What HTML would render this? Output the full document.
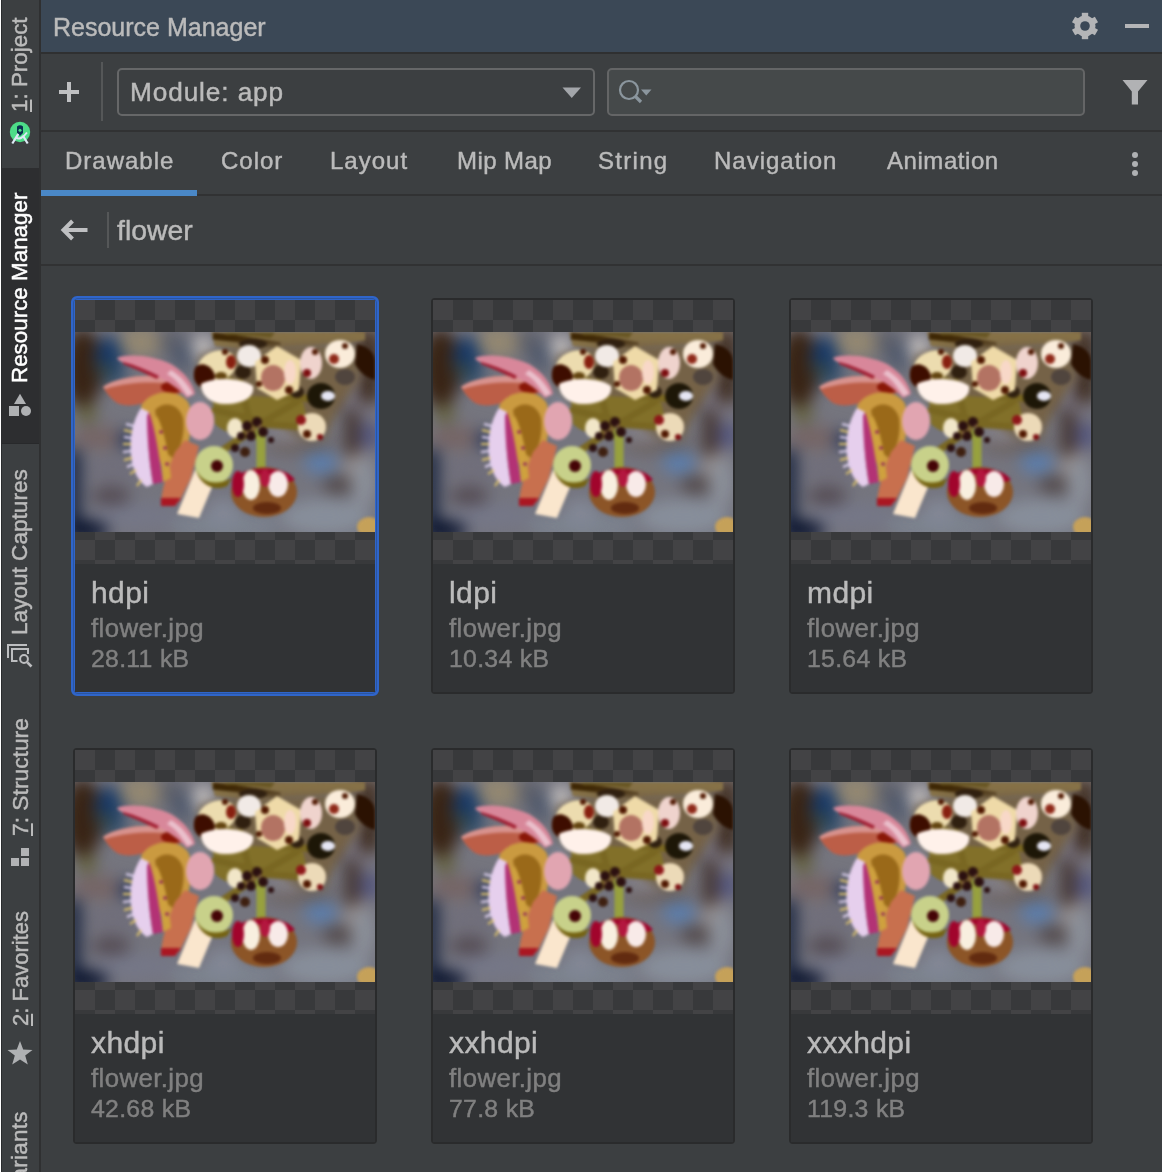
<!DOCTYPE html>
<html><head><meta charset="utf-8"><style>
html,body{margin:0;padding:0}
body{width:1162px;height:1172px;overflow:hidden;position:relative;background:#3c3f41;font-family:"Liberation Sans", sans-serif}
.t{position:absolute;white-space:nowrap;line-height:1;-webkit-text-stroke-width:0.45px;will-change:transform}
.r{position:absolute;box-sizing:content-box}
.chk{background:repeating-conic-gradient(#38393b 0% 25%,#434345 0% 50%) 0 0/40px 40px}
</style></head><body>
<svg width="0" height="0" style="position:absolute"><defs><filter id="fb1" x="-20%" y="-20%" width="140%" height="140%" color-interpolation-filters="sRGB"><feGaussianBlur stdDeviation="8"/></filter>
<filter id="fb2" x="-10%" y="-10%" width="120%" height="120%" color-interpolation-filters="sRGB"><feGaussianBlur stdDeviation="1.4"/></filter>
<filter id="fcon" x="0" y="0" width="100%" height="100%" color-interpolation-filters="sRGB"><feComponentTransfer><feFuncR type="linear" slope="1.15" intercept="-0.09"/><feFuncG type="linear" slope="1.15" intercept="-0.09"/><feFuncB type="linear" slope="1.15" intercept="-0.08"/></feComponentTransfer></filter>
<filter id="fb3" x="-20%" y="-20%" width="140%" height="140%" color-interpolation-filters="sRGB"><feGaussianBlur stdDeviation="5"/></filter>
<clipPath id="fclip"><rect width="300" height="200"/></clipPath>
<symbol id="flower" viewBox="0 0 300 200">
<g clip-path="url(#fclip)" filter="url(#fcon)">
<rect width="300" height="200" fill="#7a7a80"/>
<g filter="url(#fb1)">
<ellipse cx="8" cy="36" rx="20" ry="40" fill="#463424"/>
<ellipse cx="34" cy="28" rx="14" ry="24" fill="#28466c"/><ellipse cx="40" cy="44" rx="10" ry="8" fill="#30506e"/>
<circle cx="30" cy="38" r="6" fill="#5e603c"/>
<ellipse cx="66" cy="10" rx="22" ry="16" fill="#948a74"/>
<ellipse cx="96" cy="10" rx="12" ry="14" fill="#66686e"/>
<ellipse cx="24" cy="106" rx="28" ry="12" fill="#7a6c6a"/>
<circle cx="12" cy="82" r="10" fill="#6c6a46"/>
<rect x="-10" y="118" width="16" height="90" fill="#2a3448"/>
<ellipse cx="12" cy="198" rx="22" ry="10" fill="#1c2438"/>
<ellipse cx="36" cy="164" rx="20" ry="9" fill="#5c5458"/>
<ellipse cx="38" cy="138" rx="28" ry="14" fill="#76747c"/>
<ellipse cx="60" cy="184" rx="44" ry="12" fill="#7a7c88"/>
<ellipse cx="52" cy="108" rx="8" ry="10" fill="#304060"/>
<ellipse cx="150" cy="194" rx="55" ry="14" fill="#80868e"/>


<ellipse cx="282" cy="135" rx="14" ry="22" fill="#948c88"/>
<ellipse cx="250" cy="185" rx="45" ry="18" fill="#8a9098"/>
<ellipse cx="294" cy="104" rx="12" ry="14" fill="#5e6080"/>
<ellipse cx="285" cy="62" rx="18" ry="26" fill="#7c7880"/>
<ellipse cx="290" cy="5" rx="15" ry="12" fill="#807060"/>
<rect x="252" y="38" width="10" height="40" fill="#4a3c34"/><rect x="270" y="78" width="14" height="45" fill="#4e4038"/><rect x="284" y="0" width="20" height="70" fill="#4a3a2c"/><ellipse cx="246" cy="130" rx="17" ry="12" fill="#6482a8"/><ellipse cx="265" cy="153" rx="18" ry="9" fill="#5a5250"/><ellipse cx="288" cy="150" rx="12" ry="26" fill="#8e9298"/>
<ellipse cx="108" cy="24" rx="12" ry="15" fill="#5a6270"/>
<ellipse cx="128" cy="16" rx="10" ry="13" fill="#c4c0bc"/>
<ellipse cx="130" cy="70" rx="10" ry="8" fill="#8890a0"/>
<ellipse cx="225" cy="114" rx="36" ry="7" fill="#706660"/>
<ellipse cx="212" cy="100" rx="18" ry="10" fill="#8c8a90"/>
<ellipse cx="148" cy="180" rx="16" ry="14" fill="#868a94"/>
</g>
<g filter="url(#fb2)">
<!-- top stems band -->
<path d="M136 0 H290 V8 C270 12 230 12 200 16 C180 18 160 16 140 14 Z" fill="#8a7850"/>
<path d="M138 4 C160 6 185 10 205 14" stroke="#4a3616" stroke-width="7" fill="none"/>
<path d="M150 0 H200 L196 6 C180 4 165 3 150 3 Z" fill="#706030"/>
<path d="M124 24 L170 12 L280 10 L286 44 L262 80 L250 106 L230 108 L198 90 L162 96 L144 78 L126 56 Z" fill="#7a6a50" filter="url(#fb3)"/>
<!-- stems center -->
<path d="M138 66 C160 62 200 64 228 70 L232 88 C215 92 200 96 190 92 L176 100 C160 104 148 100 140 92 Z" fill="#857636"/>
<g stroke="#7e6e30" stroke-width="7" fill="none" stroke-linecap="round">
<path d="M140 78 L190 90"/><path d="M185 92 L222 70"/><path d="M185 92 L232 95"/><path d="M178 98 L145 120"/><path d="M165 50 L175 90"/><path d="M140 42 L172 56"/><path d="M205 64 L250 68"/>
</g>
<path d="M180 100 L186 106 L186 138" stroke="#98a048" stroke-width="9" fill="none"/>
<!-- buds upper -->
<g fill="#3e3020"><ellipse cx="168" cy="40" rx="8" ry="7"/><ellipse cx="222" cy="60" rx="7" ry="6"/><ellipse cx="178" cy="12" rx="14" ry="5"/></g>
<ellipse cx="270" cy="45" rx="10" ry="8" fill="#5a5048"/>
<ellipse cx="142" cy="34" rx="20" ry="15" transform="rotate(-20 142 34)" fill="#e2d4aa"/>
<path d="M120 36 C126 28 138 34 140 44 C140 52 132 58 124 54 C118 50 118 42 120 36 Z" fill="#4a2010"/>
<ellipse cx="156" cy="30" rx="5" ry="7" fill="#8a3020"/>
<ellipse cx="146" cy="44" rx="6" ry="4" fill="#6a5020"/>
<ellipse cx="174" cy="24" rx="12" ry="11" fill="#e6e0da"/>
<path d="M180 30 L202 14 L226 28 L224 58 L202 68 L182 56 Z" fill="#e4d2a4"/>
<ellipse cx="198" cy="46" rx="12" ry="13" fill="#b07868"/>
<ellipse cx="215" cy="40" rx="6" ry="12" fill="#ecd0c0"/>
<ellipse cx="236" cy="31" rx="11" ry="16" fill="#e4ccc4"/>
<circle cx="232" cy="41" r="4" fill="#802020"/>
<ellipse cx="265" cy="22" rx="15" ry="14" fill="#eee2d0"/>
<circle cx="259" cy="27" r="5" fill="#903828"/>
<path d="M282 12 C292 14 300 20 300 30 L300 48 C292 46 284 40 280 32 Z" fill="#3a2414"/>
<ellipse cx="246" cy="64" rx="14" ry="13" fill="#2e2818"/>
<ellipse cx="253" cy="64" rx="7" ry="5" fill="#dcdce6"/>
<ellipse cx="237" cy="95" rx="14" ry="14" fill="#e2d2b2"/>
<circle cx="226" cy="88" r="5" fill="#902828"/>
<circle cx="245" cy="105" r="3" fill="#802020"/>
<path d="M126 52 C140 44 168 46 178 54 C180 64 170 72 150 72 C136 72 126 64 126 52 Z" fill="#f2e6de"/>
<g fill="#5a2a14"><circle cx="190" cy="28" r="4"/><circle cx="214" cy="58" r="4"/><circle cx="184" cy="52" r="3"/><circle cx="270" cy="14" r="3"/><circle cx="240" cy="20" r="3"/><circle cx="232" cy="102" r="4"/><circle cx="150" cy="20" r="3"/></g>
<ellipse cx="160" cy="96" rx="8" ry="10" fill="#e6dcc0"/>
<g fill="#3a2220"><circle cx="172" cy="94" r="5"/><circle cx="182" cy="90" r="5"/><circle cx="188" cy="100" r="5"/><circle cx="176" cy="104" r="5"/><circle cx="166" cy="104" r="4"/><circle cx="160" cy="116" r="4"/><circle cx="196" cy="108" r="3"/></g><g fill="#8a6a50"><circle cx="178" cy="97" r="1.6"/><circle cx="185" cy="94" r="1.4"/><circle cx="172" cy="101" r="1.4"/></g>
<circle cx="170" cy="120" r="5" fill="#4a3020"/>
<!-- lower salmon petal -->
<path d="M28 55 C40 47 60 43 80 44 C96 46 108 52 112 60 C100 62 88 64 78 68 C64 74 50 75 42 71 C35 66 30 59 28 55 Z" fill="#b86650"/>
<path d="M28 55 C40 47 60 43 80 44 C96 46 104 50 108 54 C90 50 60 48 30 57 Z" fill="#d0948e"/>
<ellipse cx="98" cy="55" rx="12" ry="6" fill="#8c2818"/>
<!-- upper pink petal -->
<path d="M42 26 C55 21 78 24 96 32 C110 40 118 52 120 62 L112 66 C100 52 80 42 52 32 C46 30 43 28 42 26 Z" fill="#d08a98"/>
<path d="M96 38 C106 44 114 54 118 62 L112 64 C106 54 100 46 92 42 Z" fill="#e0bcc4"/>
<path d="M48 30 C60 33 72 38 84 44 L82 47 C70 41 58 36 48 32 Z" fill="#a02c3c"/>
<!-- golden cup -->
<path d="M66 74 C76 56 106 56 114 72 C118 92 114 118 106 134 L86 132 C78 112 70 92 66 74 Z" fill="#c49a4a"/>
<path d="M80 78 C90 68 104 72 108 86 C110 102 106 118 98 126 L90 120 C86 106 82 92 80 78 Z" fill="#9a7028"/>
<ellipse cx="125" cy="89" rx="14" ry="19" fill="#d8a4ac"/>
<!-- orange lower petal -->
<path d="M100 120 L110 108 L124 114 L116 146 L104 170 L86 172 C86 160 92 140 100 120 Z" fill="#c27656"/>
<path d="M86 166 L106 166 L100 174 L86 174 Z" fill="#a82830"/>
<!-- fringe -->
<path d="M66 76 C58 88 54 106 56 124 C58 140 64 150 72 155 L78 152 C74 130 72 104 74 80 Z" fill="#dcc8e0"/>
<path d="M74 80 C80 96 84 124 88 150 L78 152 C74 128 72 104 72 84 Z" fill="#b04078"/>
<path d="M82 84 C90 100 94 124 96 146 L88 150 C86 126 82 104 78 88 Z" fill="#c8a048"/>
<g fill="#903060"><circle cx="86" cy="100" r="1.8"/><circle cx="90" cy="116" r="1.8"/><circle cx="92" cy="132" r="1.8"/></g>
<g stroke="#d8c070" stroke-width="2" fill="none"><path d="M57 100 L49 98"/><path d="M56 112 L48 112"/><path d="M57 126 L49 128"/><path d="M61 138 L55 142"/><path d="M66 148 L62 154"/></g>
<g stroke="#dcd0e8" stroke-width="2" fill="none"><path d="M59 94 L51 92"/><path d="M56 106 L49 105"/><path d="M56 119 L48 120"/><path d="M59 132 L52 135"/></g>
<!-- cream petal -->
<path d="M120 138 L140 148 L124 186 L102 182 Z" fill="#eedcc4"/>
<!-- green ring bud -->
<circle cx="139" cy="133" r="19" fill="#c2ca8a"/>
<path d="M121 137 C126 150 140 155 157 146 L152 154 C138 160 124 152 121 137 Z" fill="#7a6a20"/>
<circle cx="142" cy="134" r="6" fill="#501818"/>
<!-- bottom bud -->
<ellipse cx="189" cy="160" rx="33" ry="25" fill="#8e5e34"/><path d="M160 146 C170 134 210 132 220 148 L214 150 C200 140 175 140 166 150 Z" fill="#a01838"/>
<ellipse cx="176" cy="153" rx="9" ry="15" fill="#ece4d4"/>
<ellipse cx="203" cy="152" rx="10" ry="13" fill="#ece0dc"/>
<ellipse cx="163" cy="152" rx="6" ry="13" fill="#a01838"/>
<ellipse cx="190" cy="146" rx="5" ry="9" fill="#b02848"/>
<ellipse cx="192" cy="176" rx="14" ry="6" fill="#6a3a20"/>
<ellipse cx="294" cy="195" rx="12" ry="10" fill="#c0a060"/>
</g>
</g>
</symbol>
</defs></svg>
<div class="r" style="left:0px;top:0px;width:1px;height:1172px;background:#ffffff;"></div>
<div class="r" style="left:1px;top:0px;width:1px;height:1172px;background:#2a2c2e;"></div>
<div class="r" style="left:2px;top:0px;width:37px;height:1172px;background:#3c3f41;"></div>
<div class="r" style="left:2px;top:168px;width:37px;height:276px;background:#2d2e30;"></div>
<div class="r" style="left:2px;top:443px;width:37px;height:1px;background:#28292b;"></div>
<div class="r" style="left:39px;top:0px;width:2px;height:1172px;background:#2f3031;"></div>
<div class="t" style="left:8.8px;top:111.7px;font-size:22.4px;color:#bbbbbb;transform-origin:0 0;transform:rotate(-90deg);"><u style="text-decoration-thickness:2px;text-underline-offset:3px">1</u>: Project</div>
<div class="t" style="left:9.2px;top:383.0px;font-size:22.4px;color:#ffffff;transform-origin:0 0;transform:rotate(-90deg);">Resource Manager</div>
<div class="t" style="left:9.3px;top:635.3px;font-size:22.6px;color:#bbbbbb;transform-origin:0 0;transform:rotate(-90deg);">Layout Captures</div>
<div class="t" style="left:9.1px;top:835.8px;font-size:22.8px;color:#bbbbbb;transform-origin:0 0;transform:rotate(-90deg);"><u style="text-decoration-thickness:2px;text-underline-offset:3px">7</u>: Structure</div>
<div class="t" style="left:9.8px;top:1026.0px;font-size:22.0px;color:#bbbbbb;transform-origin:0 0;transform:rotate(-90deg);"><u style="text-decoration-thickness:2px;text-underline-offset:3px">2</u>: Favorites</div>
<div class="t" style="left:9.4px;top:1252.0px;font-size:22.4px;color:#bbbbbb;transform-origin:0 0;transform:rotate(-90deg);letter-spacing:0.3px">Build Variants</div>
<svg class="r" style="left:4px;top:116px" width="32" height="32" viewBox="0 0 32 32">
<circle cx="16" cy="16" r="10.2" fill="#4ddc88"/>
<path d="M13 10.5 Q16 8 19 10.5 V17 L16 20 L13 17 Z" fill="#0b3050"/>
<circle cx="16" cy="14.3" r="1.5" fill="#4ddc88"/>
<path d="M8.3 27.5 L14.3 17.8 M23.7 27.5 L18.8 19.5" stroke="#dde8f4" stroke-width="2.2" fill="none"/>
<path d="M12 21.5 Q16.5 25 23 16.5" stroke="#dde8f4" stroke-width="2" fill="none"/>
</svg>
<svg class="r" style="left:4px;top:388px" width="32" height="32" viewBox="0 0 32 32">
<path d="M16 5.8 L22 16 L10 16 Z" fill="#afb1b3"/>
<rect x="5" y="18" width="10" height="10" fill="#afb1b3"/>
<circle cx="22" cy="23" r="5" fill="#afb1b3"/>
</svg>
<svg class="r" style="left:2px;top:636px" width="36" height="36" viewBox="0 0 36 36">
<g fill="#bdbec0"><rect x="5" y="8" width="2" height="14"/><rect x="5" y="8" width="20" height="2"/>
<rect x="9" y="12" width="2" height="14"/><rect x="9" y="12" width="18" height="2"/><rect x="25" y="12" width="2" height="6"/><rect x="9" y="24" width="6.5" height="2"/></g>
<circle cx="22" cy="23" r="3.9" stroke="#bdbec0" stroke-width="2" fill="none"/>
<path d="M25.3 26.3 L29.5 30.5" stroke="#bdbec0" stroke-width="2.6"/>
</svg>
<svg class="r" style="left:11px;top:848px" width="18" height="18" viewBox="0 0 18 18">
<g fill="#b2b3b5"><rect x="0" y="10" width="8" height="8"/><rect x="10" y="10" width="8" height="8"/><rect x="10" y="0" width="8" height="8"/></g>
</svg>
<svg class="r" style="left:7px;top:1041px" width="26" height="25" viewBox="0 0 26 25">
<path d="M13 0 L16.2 8.6 L25.5 8.9 L18.2 14.6 L20.8 23.6 L13 18.4 L5.2 23.6 L7.8 14.6 L0.5 8.9 L9.8 8.6 Z" fill="#afb1b3"/>
</svg>
<div class="r" style="left:41px;top:0px;width:1121px;height:52px;background:#3b4856;"></div>
<div class="r" style="left:41px;top:52px;width:1121px;height:2px;background:#2f3031;"></div>
<div class="t" style="left:52.8px;top:15.2px;font-size:25.0px;color:#bbbbbb;">Resource Manager</div>
<svg class="r" style="left:1071px;top:12px" width="28" height="28" viewBox="-14 -14 28 28">
<g fill="#b4b5b7">
<circle r="10.5"/>
<rect x="-3.2" y="-13.2" width="6.4" height="26.4"/>
<rect x="-3.2" y="-13.2" width="6.4" height="26.4" transform="rotate(60)"/>
<rect x="-3.2" y="-13.2" width="6.4" height="26.4" transform="rotate(120)"/>
</g>
<circle r="4.8" fill="#3b4856"/>
</svg>
<div class="r" style="left:1125px;top:24px;width:24px;height:4px;background:#b4b5b7;"></div>
<div class="r" style="left:59px;top:90px;width:20px;height:4px;background:#bfc0c2;"></div>
<div class="r" style="left:67px;top:82px;width:4px;height:20px;background:#bfc0c2;"></div>
<div class="r" style="left:101px;top:62px;width:2px;height:59px;background:#555758;"></div>
<div class="r" style="left:117px;top:68px;width:474px;height:44px;border:2px solid #666768;border-radius:5px"></div>
<div class="t" style="left:130.4px;top:79.4px;font-size:26.2px;color:#bbbbbb;letter-spacing:0.9px">Module: app</div>
<svg class="r" style="left:562px;top:87px" width="20" height="12" viewBox="0 0 20 12"><path d="M0.5 0.5 H19 L9.75 11 Z" fill="#a3a6aa"/></svg>
<div class="r" style="left:607px;top:68px;width:474px;height:44px;border:2px solid #646566;border-radius:5px;background:#45494a"></div>
<svg class="r" style="left:615px;top:76px" width="40" height="30" viewBox="0 0 40 30">
<circle cx="14" cy="14" r="9" stroke="#8b969e" stroke-width="2.2" fill="none"/>
<path d="M20 20 L26 26" stroke="#8b969e" stroke-width="3.2"/>
<path d="M26 13.5 H36.5 L31.25 19.5 Z" fill="#8b969e"/>
</svg>
<svg class="r" style="left:1122px;top:80px" width="26" height="25" viewBox="0 0 26 25"><path d="M0.5 0 H25.5 L16 11.5 V24.5 H9.8 V11.5 Z" fill="#b1b2b4"/></svg>
<div class="r" style="left:41px;top:130px;width:1121px;height:2px;background:#313233;"></div>
<div class="t" style="left:65.4px;top:149.4px;font-size:24.0px;color:#bbbbbb;letter-spacing:1.0px">Drawable</div>
<div class="t" style="left:220.6px;top:149.4px;font-size:24.0px;color:#bbbbbb;letter-spacing:1.0px">Color</div>
<div class="t" style="left:330.2px;top:149.4px;font-size:24.0px;color:#bbbbbb;letter-spacing:1.0px">Layout</div>
<div class="t" style="left:456.9px;top:149.4px;font-size:24.0px;color:#bbbbbb;letter-spacing:0.42px">Mip Map</div>
<div class="t" style="left:598.2px;top:149.4px;font-size:24.0px;color:#bbbbbb;letter-spacing:1.3px">String</div>
<div class="t" style="left:714.1px;top:149.4px;font-size:24.0px;color:#bbbbbb;letter-spacing:1.0px">Navigation</div>
<div class="t" style="left:886.5px;top:149.4px;font-size:24.0px;color:#bbbbbb;letter-spacing:0.55px">Animation</div>
<div class="r" style="left:1131.5px;top:151.8px;width:6.4px;height:6.4px;border-radius:50%;background:#afb1b3"></div>
<div class="r" style="left:1131.5px;top:160.8px;width:6.4px;height:6.4px;border-radius:50%;background:#afb1b3"></div>
<div class="r" style="left:1131.5px;top:169.8px;width:6.4px;height:6.4px;border-radius:50%;background:#afb1b3"></div>
<div class="r" style="left:41px;top:194px;width:1121px;height:2px;background:#313233;"></div>
<div class="r" style="left:41px;top:190px;width:156px;height:6px;background:#4a88c7;"></div>
<svg class="r" style="left:60px;top:219px" width="28" height="22" viewBox="0 0 28 22">
<path d="M27.5 11 H4" stroke="#bfc0c2" stroke-width="4"/>
<path d="M12.5 2 L3.5 11 L12.5 20" stroke="#bfc0c2" stroke-width="4" fill="none"/>
</svg>
<div class="r" style="left:107px;top:212px;width:2px;height:36px;background:#555758;"></div>
<div class="t" style="left:116.9px;top:216.1px;font-size:28.4px;color:#bbbbbb;">flower</div>
<div class="r" style="left:41px;top:264px;width:1121px;height:2px;background:#313233;"></div>
<div class="r" style="left:71px;top:296px;width:300px;height:392px;border:4px solid #2f65ca;border-radius:6px"></div>
<div class="r" style="left:73px;top:298px;width:302px;height:394px;border:1px solid #2b55a0;border-radius:5px"></div>
<div class="r chk" style="left:75px;top:300px;width:300px;height:264px"></div>
<svg class="r" style="left:75px;top:332px" width="300" height="200"><use href="#flower"/></svg>
<div class="r" style="left:75px;top:564px;width:300px;height:128px;background:#313335;"></div>
<div class="t" style="left:90.6px;top:577.9px;font-size:30.0px;color:#bbbbbb;letter-spacing:0.4px">hdpi</div>
<div class="t" style="left:91.1px;top:615.5px;font-size:25.8px;color:#808080;letter-spacing:0.4px">flower.jpg</div>
<div class="t" style="left:90.8px;top:646.6px;font-size:24.8px;color:#808080;letter-spacing:0.3px">28.11 kB</div>
<div class="r" style="left:431px;top:298px;width:300px;height:392px;border:2px solid #2a2b2c;border-radius:4px"></div>
<div class="r chk" style="left:433px;top:300px;width:300px;height:264px"></div>
<svg class="r" style="left:433px;top:332px" width="300" height="200"><use href="#flower"/></svg>
<div class="r" style="left:433px;top:564px;width:300px;height:128px;background:#313335;"></div>
<div class="t" style="left:448.6px;top:577.9px;font-size:30.0px;color:#bbbbbb;letter-spacing:0.4px">ldpi</div>
<div class="t" style="left:449.1px;top:615.5px;font-size:25.8px;color:#808080;letter-spacing:0.4px">flower.jpg</div>
<div class="t" style="left:448.8px;top:646.6px;font-size:24.8px;color:#808080;letter-spacing:0.3px">10.34 kB</div>
<div class="r" style="left:789px;top:298px;width:300px;height:392px;border:2px solid #2a2b2c;border-radius:4px"></div>
<div class="r chk" style="left:791px;top:300px;width:300px;height:264px"></div>
<svg class="r" style="left:791px;top:332px" width="300" height="200"><use href="#flower"/></svg>
<div class="r" style="left:791px;top:564px;width:300px;height:128px;background:#313335;"></div>
<div class="t" style="left:806.6px;top:577.9px;font-size:30.0px;color:#bbbbbb;letter-spacing:0.4px">mdpi</div>
<div class="t" style="left:807.1px;top:615.5px;font-size:25.8px;color:#808080;letter-spacing:0.4px">flower.jpg</div>
<div class="t" style="left:806.8px;top:646.6px;font-size:24.8px;color:#808080;letter-spacing:0.3px">15.64 kB</div>
<div class="r" style="left:73px;top:748px;width:300px;height:392px;border:2px solid #2a2b2c;border-radius:4px"></div>
<div class="r chk" style="left:75px;top:750px;width:300px;height:264px"></div>
<svg class="r" style="left:75px;top:782px" width="300" height="200"><use href="#flower"/></svg>
<div class="r" style="left:75px;top:1014px;width:300px;height:128px;background:#313335;"></div>
<div class="t" style="left:90.6px;top:1027.9px;font-size:30.0px;color:#bbbbbb;letter-spacing:0.4px">xhdpi</div>
<div class="t" style="left:91.1px;top:1065.5px;font-size:25.8px;color:#808080;letter-spacing:0.4px">flower.jpg</div>
<div class="t" style="left:90.8px;top:1096.6px;font-size:24.8px;color:#808080;letter-spacing:0.3px">42.68 kB</div>
<div class="r" style="left:431px;top:748px;width:300px;height:392px;border:2px solid #2a2b2c;border-radius:4px"></div>
<div class="r chk" style="left:433px;top:750px;width:300px;height:264px"></div>
<svg class="r" style="left:433px;top:782px" width="300" height="200"><use href="#flower"/></svg>
<div class="r" style="left:433px;top:1014px;width:300px;height:128px;background:#313335;"></div>
<div class="t" style="left:448.6px;top:1027.9px;font-size:30.0px;color:#bbbbbb;letter-spacing:0.4px">xxhdpi</div>
<div class="t" style="left:449.1px;top:1065.5px;font-size:25.8px;color:#808080;letter-spacing:0.4px">flower.jpg</div>
<div class="t" style="left:448.8px;top:1096.6px;font-size:24.8px;color:#808080;letter-spacing:0.3px">77.8 kB</div>
<div class="r" style="left:789px;top:748px;width:300px;height:392px;border:2px solid #2a2b2c;border-radius:4px"></div>
<div class="r chk" style="left:791px;top:750px;width:300px;height:264px"></div>
<svg class="r" style="left:791px;top:782px" width="300" height="200"><use href="#flower"/></svg>
<div class="r" style="left:791px;top:1014px;width:300px;height:128px;background:#313335;"></div>
<div class="t" style="left:806.6px;top:1027.9px;font-size:30.0px;color:#bbbbbb;letter-spacing:0.4px">xxxhdpi</div>
<div class="t" style="left:807.1px;top:1065.5px;font-size:25.8px;color:#808080;letter-spacing:0.4px">flower.jpg</div>
<div class="t" style="left:806.8px;top:1096.6px;font-size:24.8px;color:#808080;letter-spacing:0.3px">119.3 kB</div>
</body></html>
